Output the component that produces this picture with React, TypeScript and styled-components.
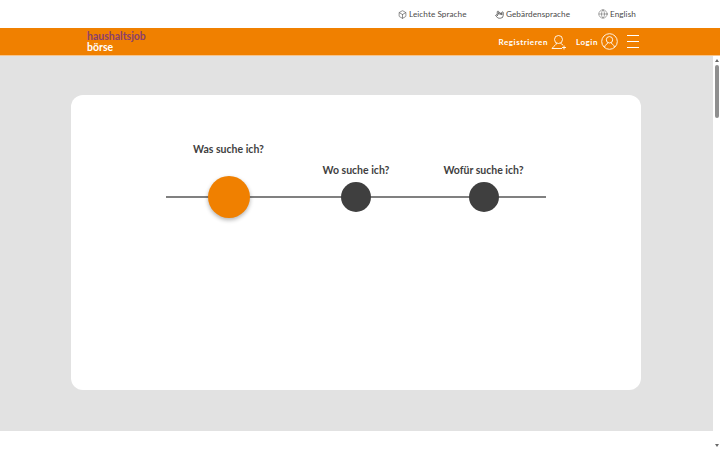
import React from 'react';
import styled, { createGlobalStyle } from 'styled-components';
import { Globe, Box, HandMetal } from 'lucide-react';

const GlobalStyle = createGlobalStyle`
  html, body {
    margin: 0;
    height: 100%;
    overflow: hidden;
    background: #fff;
    font-family: Lato, "Noto Sans", sans-serif;
  }
`;

const App: React.FC = () => {
  return (
    <Page>
      <GlobalStyle />
      <TopBar>
        <TopLink $width={97}><Box size={9} strokeWidth={1.6} />Leichte Sprache</TopLink>
        <TopLink $width={103}><HandMetal size={9} strokeWidth={2} />Gebärdensprache</TopLink>
        <TopLink $width={39}><Globe size={10} strokeWidth={1.1} />English</TopLink>
      </TopBar>
      <Header>
        <Logo>
          <LogoTop>haushaltsjob</LogoTop>
          <LogoBottom>börse</LogoBottom>
        </Logo>
        <HeaderNav>
          <NavLink>
            Registrieren
            <svg width="16" height="16" viewBox="0 0 16 16" fill="none" stroke="#fff" strokeWidth="0.9">
              <circle cx="7.5" cy="5.5" r="4" />
              <path d="M5.5 9 C5.5 11 3 11.5 1 14.5 H11" />
              <path d="M9.5 9 C10 10 11 10.5 12 11" />
              <path d="M13 11.5 V15.5 M11 13.5 H15" />
            </svg>
          </NavLink>
          <NavLink>
            Login
            <svg width="17" height="17" viewBox="0 0 17 17" fill="none" stroke="#fff" strokeWidth="0.9">
              <circle cx="8.5" cy="8.5" r="7.8" />
              <circle cx="8.5" cy="6.8" r="3.2" />
              <path d="M3.5 14 C4.5 11.5 6 10.8 7 10 M13.5 14 C12.5 11.5 11 10.8 10 10" />
            </svg>
          </NavLink>
          <Burger>
            <span />
            <span />
            <span />
          </Burger>
        </HeaderNav>
      </Header>
      <Body>
        <Main>
          <GreySection>
            <Card>
              <Stepper>
                <Step>
                  <StepLabel $active>Was suche ich?</StepLabel>
                  <Dot $active />
                </Step>
                <Step>
                  <StepLabel>Wo suche ich?</StepLabel>
                  <Dot />
                </Step>
                <Step>
                  <StepLabel>Wofür suche ich?</StepLabel>
                  <Dot />
                </Step>
              </Stepper>
            </Card>
          </GreySection>
        </Main>
        <ScrollRail>
          <ArrowUp />
          <Thumb />
          <ArrowDown />
        </ScrollRail>
      </Body>
    </Page>
  );
};

const Page = styled.div`
  height: 450px;
  width: 720px;
  display: flex;
  flex-direction: column;
  overflow: hidden;
`;

const TopBar = styled.div`
  height: 28px;
  flex: none;
  display: flex;
  align-items: center;
  padding-left: 398px;
  box-sizing: border-box;
  background: #fff;
`;

const TopLink = styled.a<{ $width: number }>`
  display: flex;
  align-items: center;
  gap: 2px;
  width: ${({ $width }) => $width}px;
  font-size: 8.2px;
  letter-spacing: 0.06px;
  color: #4a4a4a;
  white-space: nowrap;
`;

const Header = styled.header`
  height: 28px;
  flex: none;
  box-sizing: border-box;
  background: #f08000;
  border-bottom: 1px solid #f6c48c;
  display: flex;
  align-items: center;
  justify-content: space-between;
  padding: 0 81px 0 87px;
`;

const Logo = styled.div`
  display: flex;
  flex-direction: column;
  font-size: 10.5px;
  font-weight: 700;
  line-height: 10.5px;
`;

const LogoTop = styled.span`
  color: #8a3f6e;
`;

const LogoBottom = styled.span`
  color: #fff;
`;

const HeaderNav = styled.nav`
  display: flex;
  align-items: center;
  gap: 9px;
`;

const NavLink = styled.a`
  display: flex;
  align-items: center;
  gap: 3px;
  color: #fff;
  font-size: 8px;
  font-weight: 700;
  letter-spacing: 0.55px;
`;

const Burger = styled.div`
  width: 12px;
  display: flex;
  flex-direction: column;
  gap: 5px;

  span {
    display: block;
    height: 1px;
    background: #fff;
  }
`;

const Body = styled.div`
  flex: 1;
  min-height: 0;
  display: flex;
`;

const Main = styled.main`
  flex: 1;
  min-width: 0;
  background: #fff;
`;

const ScrollRail = styled.div`
  flex: none;
  width: 7px;
  box-sizing: border-box;
  padding: 3px 1px 3px 2px;
  display: flex;
  flex-direction: column;
  align-items: center;
  background: #fff;
`;

const ArrowUp = styled.div`
  flex: none;
  width: 0;
  height: 0;
  border-left: 2px solid transparent;
  border-right: 2px solid transparent;
  border-bottom: 3px solid #6a6a6a;
  margin-bottom: 3px;
`;

const ArrowDown = styled.div`
  flex: none;
  width: 0;
  height: 0;
  margin-top: auto;
  border-left: 2px solid transparent;
  border-right: 2px solid transparent;
  border-top: 3px solid #6a6a6a;
`;

const Thumb = styled.div`
  flex: none;
  width: 4px;
  height: 53px;
  border-radius: 2px;
  background: #8f8f8f;
`;

const GreySection = styled.section`
  background: #e2e2e2;
  height: 375px;
  box-sizing: border-box;
  padding: 39px 72px 41px 71px;
`;

const Card = styled.div`
  height: 100%;
  box-sizing: border-box;
  background: #fff;
  border-radius: 12px;
  padding: 0 95px;
`;

const Stepper = styled.div`
  position: relative;
  width: 380px;
  height: 123px;
  display: flex;
  justify-content: center;
  align-items: flex-end;

  &::before {
    content: '';
    position: absolute;
    left: 0;
    right: 0;
    bottom: 20px;
    height: 2px;
    background: #808080;
  }
`;

const Step = styled.div`
  position: relative;
  flex: none;
  width: 127.5px;
  display: flex;
  flex-direction: column;
  align-items: center;
`;

const StepLabel = styled.div<{ $active?: boolean }>`
  font-size: 10.5px;
  font-weight: 700;
  line-height: 14px;
  color: #3f3f3f;
  white-space: nowrap;
  margin-bottom: ${({ $active }) => ($active ? '20px' : '5px')};
`;

const Dot = styled.div<{ $active?: boolean }>`
  width: ${({ $active }) => ($active ? '42px' : '30px')};
  height: ${({ $active }) => ($active ? '42px' : '30px')};
  margin-bottom: ${({ $active }) => ($active ? '0' : '6px')};
  border-radius: 50%;
  background: ${({ $active }) => ($active ? '#f08000' : '#3f3f3f')};
  box-shadow: ${({ $active }) => ($active ? '0 2px 4px rgba(0, 0, 0, 0.3)' : 'none')};
`;

export default App;
